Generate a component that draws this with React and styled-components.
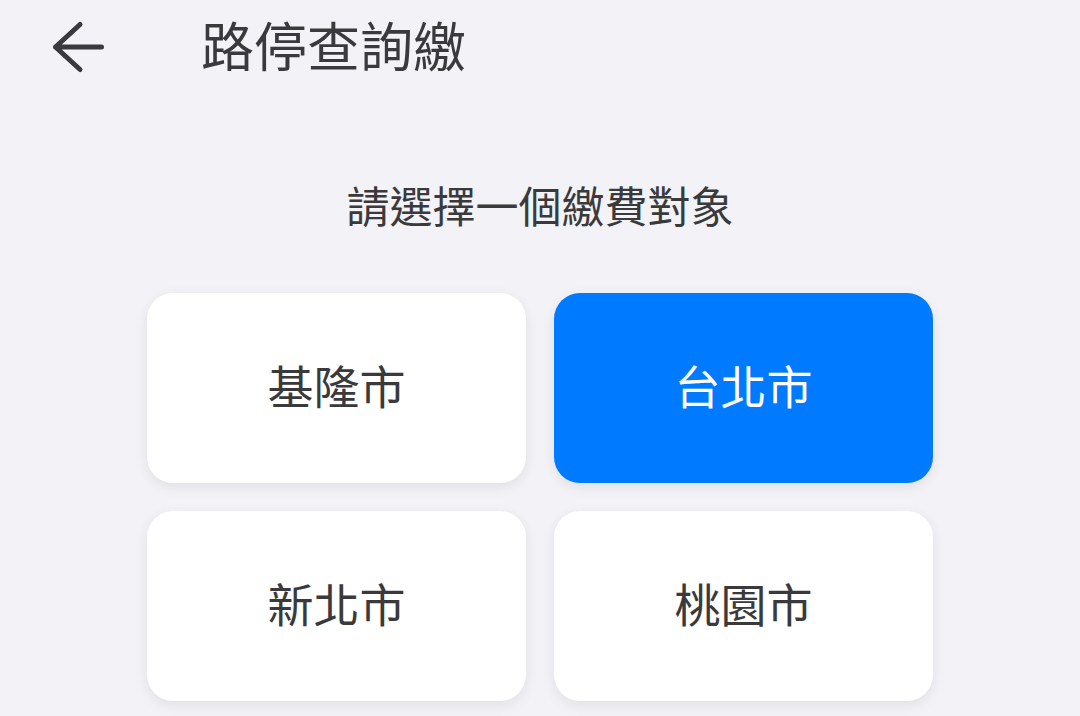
import React, { useState } from "react";
import styled, { createGlobalStyle } from "styled-components";

const Global = createGlobalStyle`
  html, body { margin: 0; padding: 0; background: #f2f2f7; }
  body { font-family: "Noto Sans CJK TC", "Noto Sans", sans-serif; color: #3a3a3c; }
  * { box-sizing: border-box; }
`;

const Page = styled.div`
  width: 1080px;
  height: 716px;
  overflow: hidden;
  background: #f2f2f7;
  display: flex;
  flex-direction: column;
`;

const Header = styled.header`
  height: 94px;
  display: flex;
  align-items: center;
  padding-left: 50px;
`;

const BackButton = styled.button`
  width: 58px;
  height: 56px;
  padding: 0;
  border: none;
  background: none;
  display: flex;
  cursor: pointer;
`;

const Title = styled.h1`
  margin: 0 0 6px 93px;
  font-size: 53px;
  line-height: 1;
  font-weight: 400;
  color: #3a3a3c;
`;

const Prompt = styled.p`
  margin: 89px 0 0;
  text-align: center;
  font-size: 43px;
  line-height: 43px;
  height: 43px;
  color: #3a3a3c;
`;

const Grid = styled.div`
  margin: 67px auto 0;
  display: grid;
  grid-template-columns: repeat(2, 379px);
  grid-auto-rows: 190px;
  gap: 28px;
`;

const Card = styled.button`
  border: none;
  border-radius: 26px;
  padding: 0 0 8px;
  background: ${(p) => (p.$active ? "#007aff" : "#ffffff")};
  color: ${(p) => (p.$active ? "#ffffff" : "#3a3a3c")};
  box-shadow: 0 4px 14px rgba(0, 0, 0, 0.08);
  font-family: "Noto Sans CJK TC", "Noto Sans", sans-serif;
  font-size: 46px;
  line-height: 1;
  display: flex;
  align-items: center;
  justify-content: center;
  cursor: pointer;
`;

const cities = ["基隆市", "台北市", "新北市", "桃園市"];

export default function App() {
  const [selected, setSelected] = useState("台北市");
  return (
    <Page>
      <Global />
      <Header>
        <BackButton aria-label="返回">
          <svg width="58" height="56" viewBox="0 0 58 56" fill="none">
            <path
              d="M5.5 28 H51.5 M30 5.5 L5.5 28 L30 50.5"
              stroke="#3a3a3c"
              strokeWidth="5"
              strokeLinecap="round"
              strokeLinejoin="round"
            />
          </svg>
        </BackButton>
        <Title>路停查詢繳</Title>
      </Header>
      <Prompt>請選擇一個繳費對象</Prompt>
      <Grid>
        {cities.map((c) => (
          <Card key={c} $active={c === selected} onClick={() => setSelected(c)}>
            {c}
          </Card>
        ))}
      </Grid>
    </Page>
  );
}
